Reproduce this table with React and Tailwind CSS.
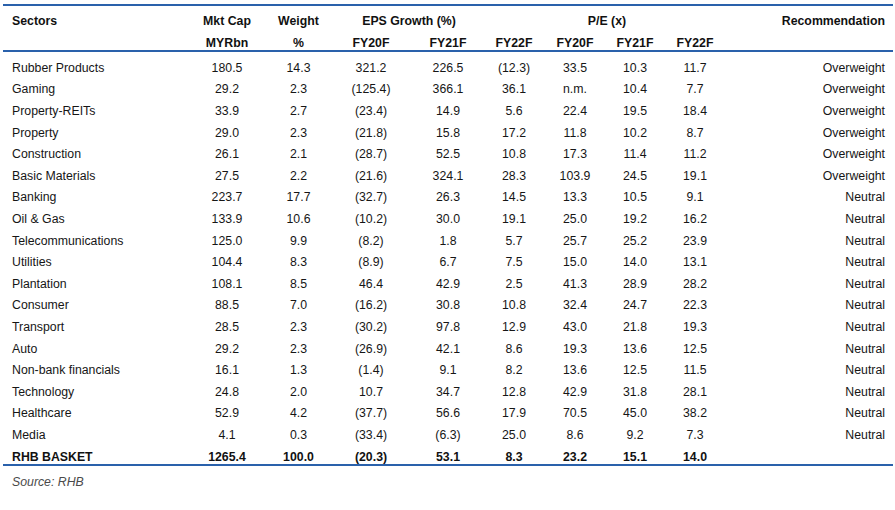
import React from 'react';

const rows = [
  ['Rubber Products', '180.5', '14.3', '321.2', '226.5', '(12.3)', '33.5', '10.3', '11.7', 'Overweight'],
  ['Gaming', '29.2', '2.3', '(125.4)', '366.1', '36.1', 'n.m.', '10.4', '7.7', 'Overweight'],
  ['Property-REITs', '33.9', '2.7', '(23.4)', '14.9', '5.6', '22.4', '19.5', '18.4', 'Overweight'],
  ['Property', '29.0', '2.3', '(21.8)', '15.8', '17.2', '11.8', '10.2', '8.7', 'Overweight'],
  ['Construction', '26.1', '2.1', '(28.7)', '52.5', '10.8', '17.3', '11.4', '11.2', 'Overweight'],
  ['Basic Materials', '27.5', '2.2', '(21.6)', '324.1', '28.3', '103.9', '24.5', '19.1', 'Overweight'],
  ['Banking', '223.7', '17.7', '(32.7)', '26.3', '14.5', '13.3', '10.5', '9.1', 'Neutral'],
  ['Oil & Gas', '133.9', '10.6', '(10.2)', '30.0', '19.1', '25.0', '19.2', '16.2', 'Neutral'],
  ['Telecommunications', '125.0', '9.9', '(8.2)', '1.8', '5.7', '25.7', '25.2', '23.9', 'Neutral'],
  ['Utilities', '104.4', '8.3', '(8.9)', '6.7', '7.5', '15.0', '14.0', '13.1', 'Neutral'],
  ['Plantation', '108.1', '8.5', '46.4', '42.9', '2.5', '41.3', '28.9', '28.2', 'Neutral'],
  ['Consumer', '88.5', '7.0', '(16.2)', '30.8', '10.8', '32.4', '24.7', '22.3', 'Neutral'],
  ['Transport', '28.5', '2.3', '(30.2)', '97.8', '12.9', '43.0', '21.8', '19.3', 'Neutral'],
  ['Auto', '29.2', '2.3', '(26.9)', '42.1', '8.6', '19.3', '13.6', '12.5', 'Neutral'],
  ['Non-bank financials', '16.1', '1.3', '(1.4)', '9.1', '8.2', '13.6', '12.5', '11.5', 'Neutral'],
  ['Technology', '24.8', '2.0', '10.7', '34.7', '12.8', '42.9', '31.8', '28.1', 'Neutral'],
  ['Healthcare', '52.9', '4.2', '(37.7)', '56.6', '17.9', '70.5', '45.0', '38.2', 'Neutral'],
  ['Media', '4.1', '0.3', '(33.4)', '(6.3)', '25.0', '8.6', '9.2', '7.3', 'Neutral'],
];

const total = ['RHB BASKET', '1265.4', '100.0', '(20.3)', '53.1', '8.3', '23.2', '15.1', '14.0', ''];

// column widths line up with the printed report
const cols = 'grid grid-cols-[180px_70px_73px_72px_82px_50px_72px_48px_72px_154px]';

const Row = ({ cells, className }) => (
  <div className={`${cols} items-center ${className}`}>
    {cells.map((c, i) => (
      <div
        key={i}
        className={i === 0 ? 'text-left' : i === 9 ? 'text-right' : 'text-center'}
      >
        {c}
      </div>
    ))}
  </div>
);

const Rule = () => <div className="h-[2px] bg-[#2a61ab] ml-[3px] mr-[2px]" />;

export default function App() {
  return (
    <div
      className="w-[895px] h-[510px] bg-white pt-[4px] text-[12.3px] leading-[14px] text-[#161616]"
      style={{ fontFamily: '"Liberation Sans", Arial, sans-serif' }}
    >
      <Rule />
      <div className="pl-[12px] font-bold text-[#111]">
        <div className={`${cols} h-[30px] items-center`}>
          <div>Sectors</div>
          <div className="text-center">Mkt Cap</div>
          <div className="text-center">Weight</div>
          <div className="col-span-2 text-center pr-[6px]">EPS Growth (%)</div>
          <div />
          <div className="col-span-2 text-center pl-[16px]">P/E (x)</div>
          <div />
          <div className="text-right">Recommendation</div>
        </div>
        <Row
          cells={['', 'MYRbn', '%', 'FY20F', 'FY21F', 'FY22F', 'FY20F', 'FY21F', 'FY22F', '']}
          className="h-[14px]"
        />
      </div>
      <Rule />
      <div className="pl-[12px] pt-[5px]">
        {rows.map((r, i) => (
          <Row key={i} cells={r} className="h-[21.6px]" />
        ))}
        <Row cells={total} className="h-[18px] font-bold text-[#111] !items-end" />
      </div>
      <Rule />
      <div className="pl-[12px] mt-[9px] italic text-[#4a4a4a]">Source: RHB</div>
    </div>
  );
}
